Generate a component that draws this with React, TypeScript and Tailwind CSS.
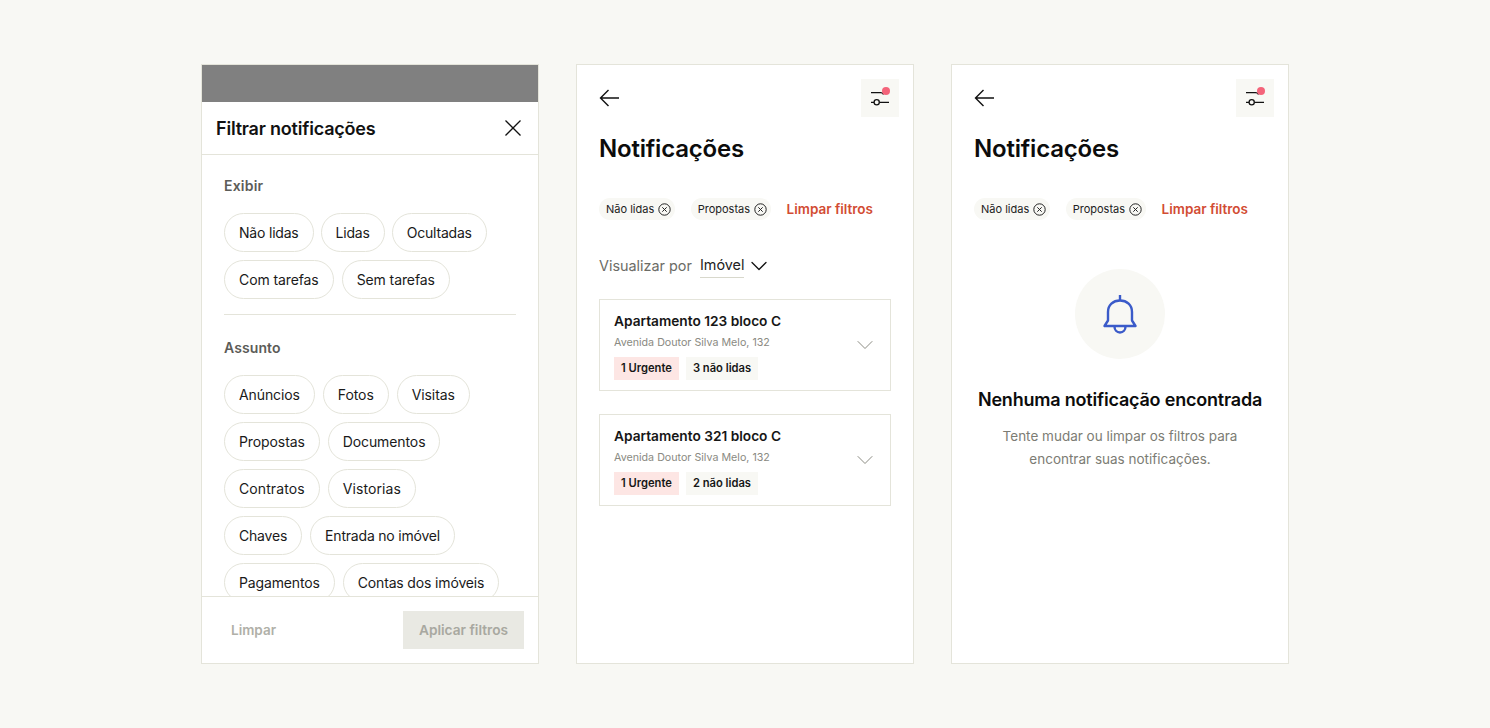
import React from 'react';
import { ChevronDown } from 'lucide-react';

const Chip = ({ children }: { children: React.ReactNode }) => (
  <div className="flex h-[39px] shrink-0 items-center rounded-[20px] border border-[#e4e4da] px-[14px] text-[14px] text-[#1a1a1a]">
    {children}
  </div>
);

const ChipRow = ({ items, gap = 'gap-[8px] tracking-[-0.2px]' }: { items: string[]; gap?: string }) => (
  <div className={`flex ${gap}`}>
    {items.map(item => (
      <Chip key={item}>{item}</Chip>
    ))}
  </div>
);

const BackArrow = () => (
  <svg width="20" height="18" viewBox="0 0 20 18" fill="none" stroke="#111" strokeWidth="1.4">
    <path d="M20 9H1.500M9.500 1L1.500 9l8 8" />
  </svg>
);

const FilterIcon = () => (
  <svg width="38" height="38" viewBox="0 0 38 38" fill="none" stroke="#111" strokeWidth="1.3">
    <path d="M10 13.700h9.500c1.500 0 2.500.6 3 1.800" />
    <path d="M10 23.300h3M18.500 23.300H28" />
    <circle cx="15.700" cy="23.300" r="2.600" />
    <circle cx="25" cy="12" r="4" fill="#f4647a" stroke="none" />
  </svg>
);

const TagClose = () => (
  <svg width="13" height="13" viewBox="0 0 13 13" fill="none" stroke="#222" strokeWidth="1">
    <circle cx="6.500" cy="6.500" r="5.700" />
    <path d="M4.300 4.300l4.400 4.400M8.700 4.300l-4.400 4.400" />
  </svg>
);

const Tag = ({ label }: { label: string }) => (
  <div className="mr-[15.500px] flex h-[22px] items-center gap-[4px] rounded-full bg-[#f8f8f4] pl-[7px] pr-[4px] text-[11px] text-[#222]">
    {label}
    <TagClose />
  </div>
);

const PanelHeader = () => (
  <>
    <div className="flex items-center justify-between pl-[22px] pr-[14px] pt-[14px]">
      <BackArrow />
      <div className="flex h-[38px] w-[38px] items-center justify-center bg-[#f8f8f4]">
        <FilterIcon />
      </div>
    </div>
    <h1 className="mt-[14px] pl-[22px] text-[24px] leading-[36px] font-semibold tracking-[-0.2px] text-[#0c0c0c]">
      Notificações
    </h1>
    <div className="mt-[31px] flex items-center pl-[22px]">
      <Tag label="Não lidas" />
      <Tag label="Propostas" />
      <span className="text-[13.500px] font-semibold text-[#d24c33]">Limpar filtros</span>
    </div>
  </>
);

const PropertyCard = ({ name, unread }: { name: string; unread: string }) => (
  <div className="relative h-[92px] border border-[#e4e4da] pl-[14px] pt-[12px]">
    <div className="text-[13.700px] leading-[18px] font-semibold text-[#161616]">{name}</div>
    <div className="mt-[6px] text-[10.700px] leading-[14px] text-[#8a8a82]">Avenida Doutor Silva Melo, 132</div>
    <div className="mt-[7px] flex gap-[7px]">
      <span className="flex h-[23px] items-center bg-[#fde6e4] px-[7px] text-[11.200px] font-semibold text-[#161616]">1 Urgente</span>
      <span className="flex h-[23px] items-center bg-[#f8f8f4] px-[7px] text-[11.200px] font-semibold text-[#161616]">{unread}</span>
    </div>
    <ChevronDown size={28} strokeWidth={0.85} className="absolute right-[11px] top-[31px] text-[#8a8a82]" />
  </div>
);

export default function App() {
  return (
    <div
      className="flex h-[728px] justify-center gap-[37px] bg-[#f8f8f4] pt-[64px]"
      style={{ fontFamily: 'Inter, "Liberation Sans", sans-serif' }}
    >
      {/* filtros */}
      <div className="flex h-[600px] w-[338px] flex-col border border-[#e4e4da] bg-white">
        <div className="h-[37px] shrink-0 bg-[#808080]" />
        <div className="flex h-[53px] shrink-0 items-center justify-between border-b border-[#e4e4da] pl-[14px] pr-[17px]">
          <span className="text-[18px] font-semibold tracking-[-0.2px] text-[#111]">Filtrar notificações</span>
          <svg width="16" height="16" viewBox="0 0 16 16" fill="none" stroke="#111" strokeWidth="1.3">
            <path d="M.5.5l15 15M15.500.5l-15 15" />
          </svg>
        </div>
        <div className="min-h-0 flex-1 overflow-hidden px-[22px]">
          <div className="mt-[21px] text-[14px] leading-[20px] font-semibold tracking-[0.2px] text-[#5c5c58]">Exibir</div>
          <div className="mt-[17px] flex flex-col gap-[8px]">
            <ChipRow items={['Não lidas', 'Lidas', 'Ocultadas']} gap="gap-[7px] tracking-[-0.2px]" />
            <ChipRow items={['Com tarefas', 'Sem tarefas']} gap="gap-[8px] tracking-[-0.1px]" />
          </div>
          <div className="mt-[15px] border-t border-[#e4e4da]" />
          <div className="mt-[23px] text-[14px] leading-[20px] font-semibold tracking-[0.1px] text-[#5c5c58]">Assunto</div>
          <div className="mt-[17px] flex flex-col gap-[8px]">
            <ChipRow items={['Anúncios', 'Fotos', 'Visitas']} gap="gap-[8px] tracking-[-0.1px]" />
            <ChipRow items={['Propostas', 'Documentos']} gap="gap-[8px] tracking-[-0.1px]" />
            <ChipRow items={['Contratos', 'Vistorias']} gap="gap-[8px] tracking-[0.1px]" />
            <ChipRow items={['Chaves', 'Entrada no imóvel']} />
            <ChipRow items={['Pagamentos', 'Contas dos imóveis']} gap="gap-[8px] tracking-[-0.15px]" />
          </div>
        </div>
        <div className="flex h-[67px] shrink-0 items-center justify-between border-t border-[#e4e4da] pl-[29px] pr-[14px]">
          <span className="text-[13.500px] font-semibold text-[#b0b0a8]">Limpar</span>
          <div className="flex h-[38px] w-[121px] items-center justify-center bg-[#e9e9e3] text-[13.700px] font-semibold text-[#a8a8a0]">
            Aplicar filtros
          </div>
        </div>
      </div>

      {/* lista */}
      <div className="h-[600px] w-[338px] border border-[#e4e4da] bg-white">
        <PanelHeader />
        <div className="mt-[34px] flex items-center pl-[22px] text-[14.400px] text-[#6c6c66]">
          Visualizar por
          <span className="ml-[8px] border-b border-[#d8d8cc] pb-[1px] text-[#222]">Imóvel</span>
          <ChevronDown size={28} strokeWidth={1.1} className="-my-[4px] ml-px text-[#111]" />
        </div>
        <div className="mt-[21px] flex flex-col gap-[23px] px-[22px]">
          <PropertyCard name="Apartamento 123 bloco C" unread="3 não lidas" />
          <PropertyCard name="Apartamento 321 bloco C" unread="2 não lidas" />
        </div>
      </div>

      {/* vazio */}
      <div className="h-[600px] w-[338px] border border-[#e4e4da] bg-white">
        <PanelHeader />
        <div className="mt-[49px] flex flex-col items-center">
          <div className="flex h-[90px] w-[90px] items-center justify-center rounded-full bg-[#f8f8f4]">
            <svg width="40" height="40" viewBox="0 0 40 40" fill="none" stroke="#3b5bc9" strokeWidth="2.400" strokeLinejoin="round">
              <path d="M20 1v6" />
              <path d="M4.500 32H35.500L32 26.500V18C32 11 27 6.500 20 6.500S8 11 8 18v8.500z" />
              <path d="M14.500 32.500c0 3.500 2.300 6 5.500 6s5.500-2.500 5.500-6" />
            </svg>
          </div>
          <div className="mt-[29px] text-[18px] leading-[24px] font-semibold tracking-[-0.2px] text-[#0c0c0c]">
            Nenhuma notificação encontrada
          </div>
          <div className="mt-[13px] text-center text-[13.500px] leading-[23px] text-[#7c7c74]">
            Tente mudar ou limpar os filtros para
            <br />
            encontrar suas notificações.
          </div>
        </div>
      </div>
    </div>
  );
}
